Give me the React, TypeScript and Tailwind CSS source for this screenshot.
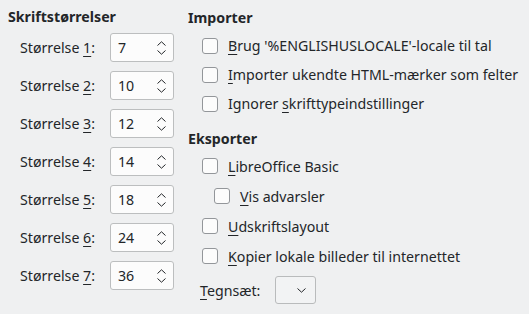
import React from "react";

const Chevron = ({ dir }: { dir: "up" | "down" }) => (
  <svg width="9" height="5" viewBox="0 0 9 5" className="block">
    <path
      d={dir === "up" ? "M0.5 4.5 L4.5 0.8 L8.5 4.5" : "M0.5 0.5 L4.5 4.2 L8.5 0.5"}
      fill="none"
      stroke="#232629"
      strokeWidth="1"
    />
  </svg>
);

const U = ({ children }: { children: React.ReactNode }) => (
  <span className="underline decoration-1 underline-offset-[3px]">{children}</span>
);

const SpinRow = ({ n, v }: { n: string; v: string }) => (
  <div className="flex items-center h-[29px]">
    <div className="w-[102px] pl-[12px] whitespace-nowrap">
      Størrelse <U>{n}</U>:
    </div>
    <div className="w-[64px] h-[29px] bg-[#fcfcfc] border border-[#bcbebf] rounded-[3px] flex items-center pl-[7px] pr-[7px] justify-between">
      <span>{v}</span>
      <div className="flex flex-col gap-[4px] items-center">
        <Chevron dir="up" />
        <Chevron dir="down" />
      </div>
    </div>
  </div>
);

const Check = ({ children, indent = false, h = 29 }: { children: React.ReactNode; indent?: boolean; h?: number }) => (
  <div className={`flex items-center ${h === 29 ? "h-[29px]" : "h-[30px]"} ${indent ? "pl-[26px]" : "pl-[14px]"}`}>
    <div className="w-[16px] h-[16px] border border-[#93969a] rounded-[3px] bg-[#fcfcfc] shrink-0" />
    <div className="ml-[10px] whitespace-nowrap">{children}</div>
  </div>
);

export default function App() {
  return (
    <div
      className="w-[529px] h-[314px] bg-[#eff0f1] text-[#232629] text-[14.2px] leading-[19px] flex overflow-hidden"
      style={{ fontFamily: '"Noto Sans", sans-serif' }}
    >
      <div className="w-[180px] pl-[8px] pt-[7px] flex flex-col">
        <div className="font-bold h-[19px]">Skriftstørrelser</div>
        <div className="flex flex-col gap-[9px] mt-[7px]">
          <SpinRow n="1" v="7" />
          <SpinRow n="2" v="10" />
          <SpinRow n="3" v="12" />
          <SpinRow n="4" v="14" />
          <SpinRow n="5" v="18" />
          <SpinRow n="6" v="24" />
          <SpinRow n="7" v="36" />
        </div>
      </div>
      <div className="pl-[8px] pt-[8px] flex flex-col">
        <div className="font-bold h-[19px]">Importer</div>
        <div className="mt-[4px] flex flex-col">
          <Check>
            <U>B</U>rug '%ENGLISHUSLOCALE'-locale til tal
          </Check>
          <Check>
            <U>I</U>mporter ukendte HTML-mærker som felter
          </Check>
          <Check>
            Ignorer <U>s</U>krifttypeindstillinger
          </Check>
        </div>
        <div className="font-bold h-[19px] mt-[11px]">Eksporter</div>
        <div className="mt-[3px] flex flex-col">
          <Check h={30}>
            <U>L</U>ibreOffice Basic
          </Check>
          <Check h={30} indent>
            <U>V</U>is advarsler
          </Check>
          <Check h={30}>
            <U>U</U>dskriftslayout
          </Check>
          <Check h={30}>
            <U>K</U>opier lokale billeder til internettet
          </Check>
        </div>
        <div className="flex items-center mt-[5px] pl-[12px]">
          <div className="w-[75px]">
            <U>T</U>egnsæt:
          </div>
          <div className="w-[41px] h-[28px] border border-[#b9bbbc] rounded-[3px] bg-[#f2f3f4] flex items-center justify-end pr-[9px]">
            <Chevron dir="down" />
          </div>
        </div>
      </div>
    </div>
  );
}
